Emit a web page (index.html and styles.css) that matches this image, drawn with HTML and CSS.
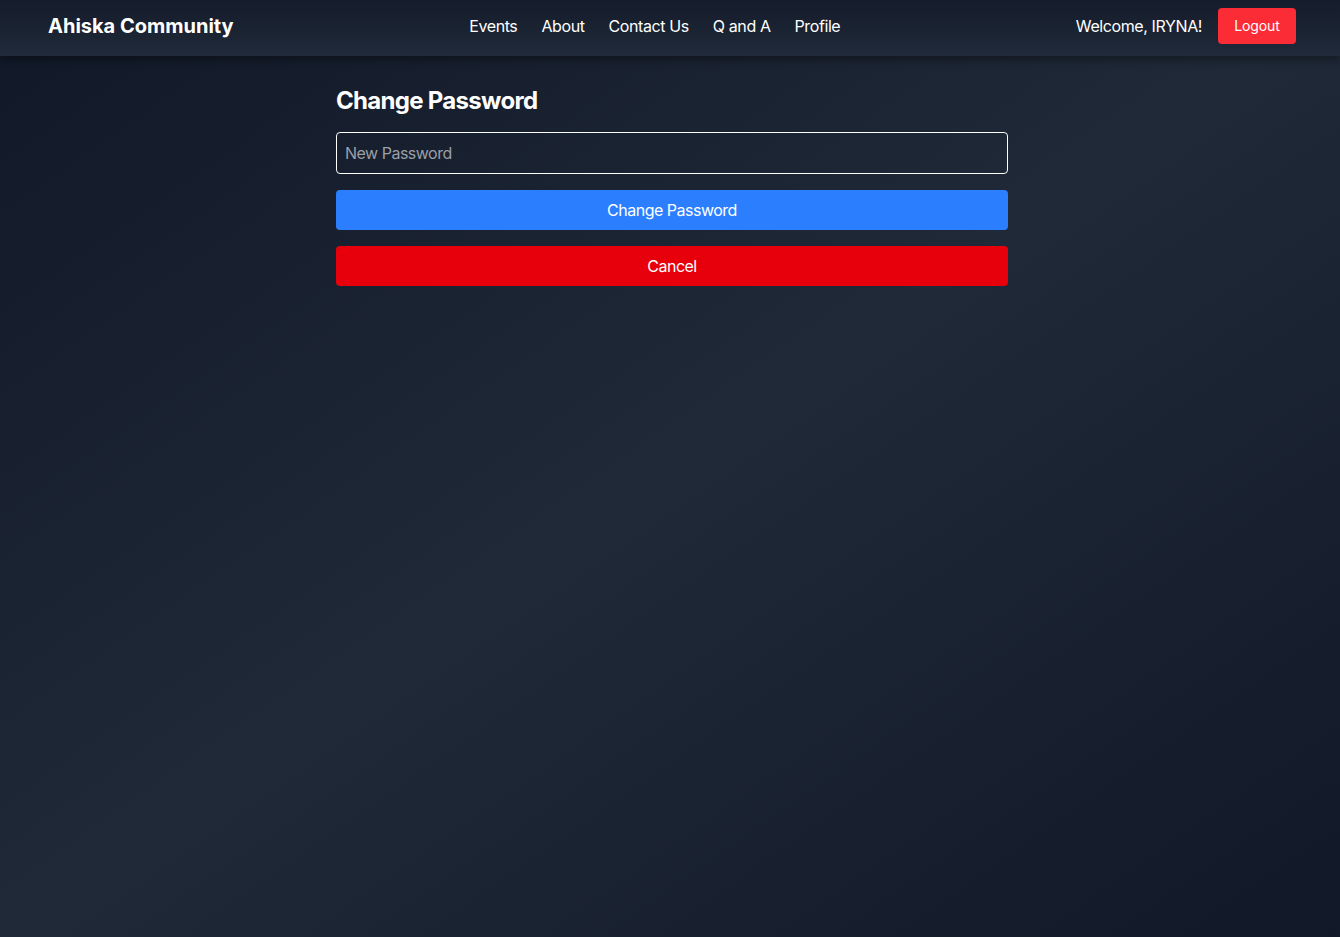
FILE: index.html
```html
<!DOCTYPE html>
<html lang="en">
<head>
<meta charset="utf-8">
<title>Change Password - Ahiska Community</title>
<link rel="stylesheet" href="styles.css">
</head>
<body>
<nav class="navbar">
  <div class="brand">Ahiska Community</div>
  <ul class="nav-links">
    <li><a href="#">Events</a></li>
    <li><a href="#">About</a></li>
    <li><a href="#">Contact Us</a></li>
    <li><a href="#">Q and A</a></li>
    <li><a href="#">Profile</a></li>
  </ul>
  <div class="user-area">
    <span class="welcome">Welcome, IRYNA!</span>
    <button class="btn-logout">Logout</button>
  </div>
</nav>
<main class="page">
  <div class="card">
    <h2 class="title">Change Password</h2>
    <form class="form">
      <input class="input" type="password" placeholder="New Password">
      <button type="button" class="btn btn-primary">Change Password</button>
      <button type="button" class="btn btn-danger">Cancel</button>
    </form>
  </div>
</main>
</body>
</html>
```
FILE: styles.css
```css
* { box-sizing: border-box; }
html, body { height: 100%; }
body {
  margin: 0;
  min-height: 937px;
  font-family: Inter, "Liberation Sans", sans-serif;
  color: #fff;
  letter-spacing: -0.4px;
  background: linear-gradient(to bottom right, #111827 0%, #1f2937 50%, #111827 100%);
  -webkit-font-smoothing: antialiased;
}
.navbar {
  height: 56px;
  display: flex;
  align-items: center;
  justify-content: space-between;
  padding: 0 44px 4px 48px;
  background: linear-gradient(to bottom, #151c2b 0%, #1b2433 60%, #202a3a 100%);
  box-shadow: 0 4px 8px rgba(0, 0, 0, 0.35);
  position: relative;
}
.brand {
  font-size: 20px;
  font-weight: 700;
  letter-spacing: 0;
}
.nav-links {
  list-style: none;
  margin: 0;
  padding: 0;
  display: flex;
  gap: 24px;
}
.nav-links a {
  color: #fff;
  text-decoration: none;
  font-size: 16px;
}
.user-area {
  display: flex;
  align-items: center;
  gap: 16px;
}
.welcome { font-size: 16px; }
.btn-logout {
  font-family: inherit;
  font-size: 14px;
  line-height: 20px;
  letter-spacing: -0.1px;
  color: #fff;
  background: #fb2c36;
  border: none;
  border-radius: 4px;
  padding: 8px 16px;
  width: 78px;
}
.page {
  padding: 29px 0 0 4px;
}
.card {
  width: 672px;
  margin: 0 auto;
}
.title {
  margin: 0 0 15px;
  font-size: 24px;
  line-height: 32px;
  font-weight: 700;
  letter-spacing: -0.7px;
}
.form {
  display: flex;
  flex-direction: column;
  gap: 16px;
}
.input {
  height: 42px;
  width: 100%;
  background: transparent;
  border: 1px solid #fff;
  border-radius: 4px;
  padding: 0 8px;
  color: #fff;
  font-family: inherit;
  font-size: 16px;
  letter-spacing: -0.5px;
  outline: none;
}
.input::placeholder { color: #9a9fa8; }
.btn {
  height: 40px;
  width: 100%;
  border: none;
  border-radius: 4px;
  color: #fff;
  font-family: inherit;
  font-size: 16px;
  letter-spacing: -0.5px;
}
.btn-primary { background: #2b7fff; }
.btn-danger { background: #e7000b; }
```
